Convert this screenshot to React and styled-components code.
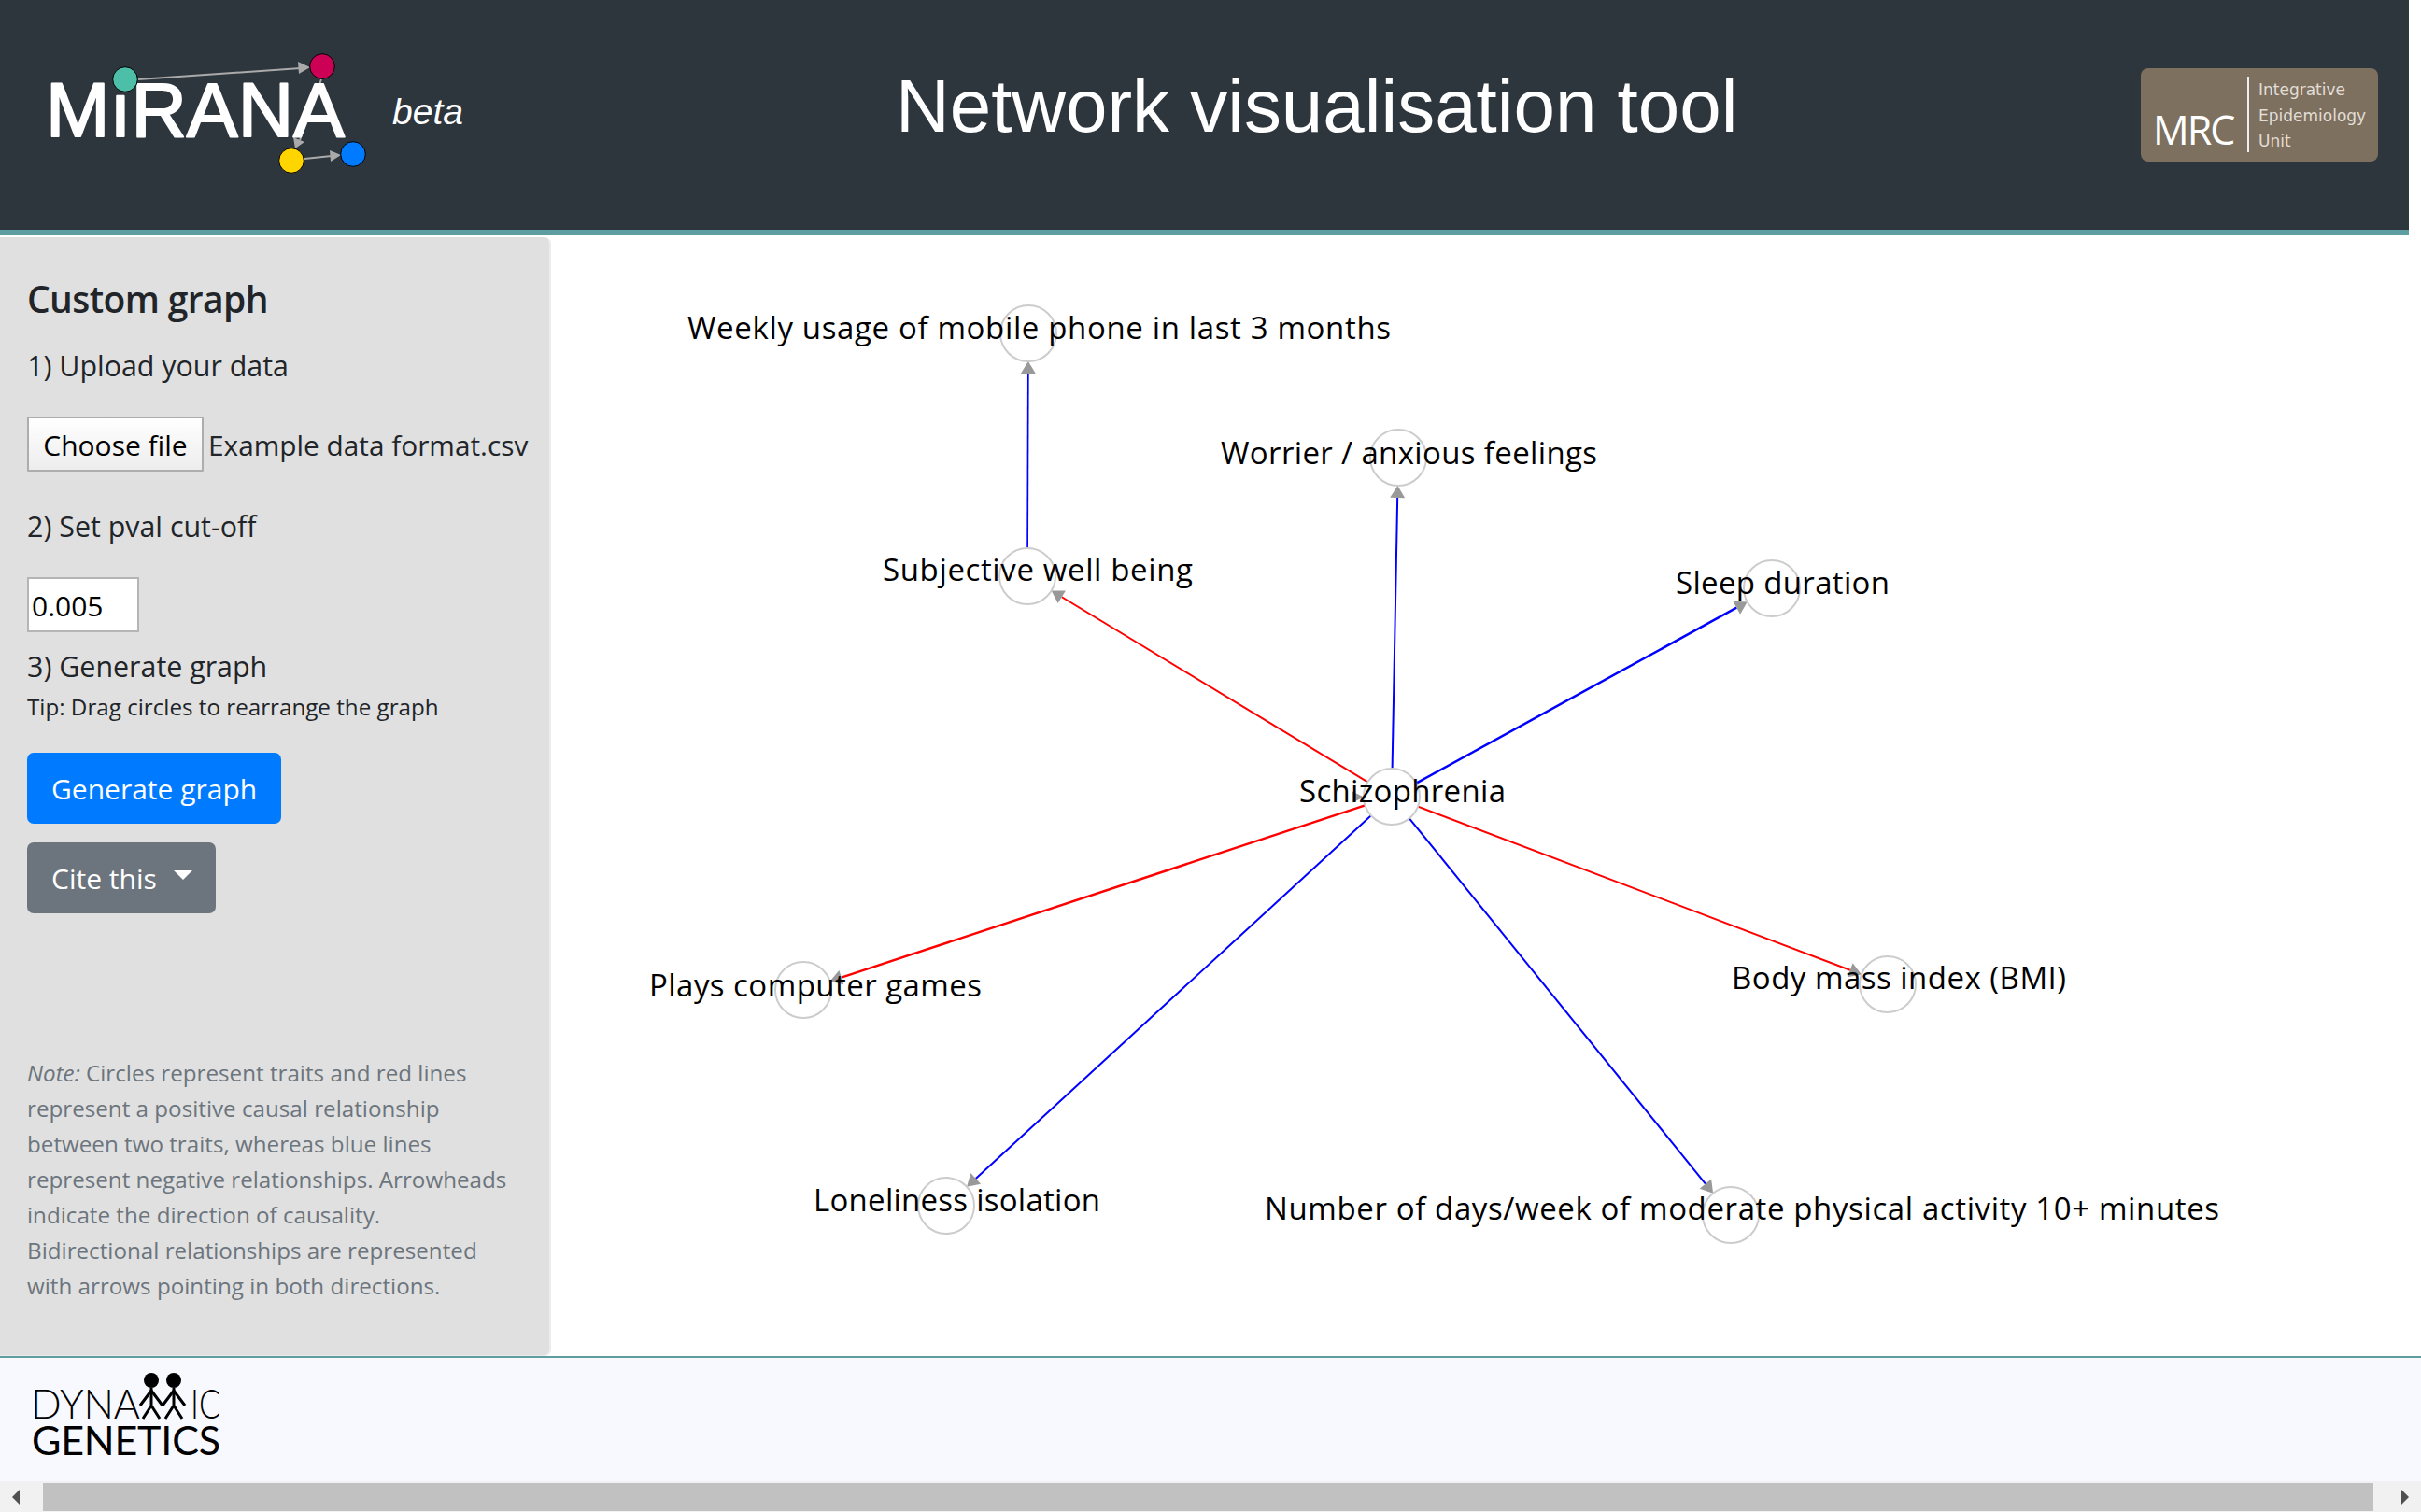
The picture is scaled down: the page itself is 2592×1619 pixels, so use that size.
import React from 'react'
import styled, { createGlobalStyle } from 'styled-components'

const Global = createGlobalStyle`
  html, body { margin: 0; padding: 0; background: #fff; overflow: hidden; }
  * { box-sizing: border-box; }
`

const SANS = '"Open Sans", "Noto Sans", sans-serif'
const ARIAL = '"Liberation Sans", Arial, sans-serif'

const Page = styled.div`
  width: 2592px;
  height: 1619px;
  display: flex;
  flex-direction: column;
  font-family: ${SANS};
  color: #212529;
`

const Header = styled.header`
  width: 2579px;
  height: 252px;
  flex: none;
  background: #2d353d;
  border-bottom: 6px solid #5f9ea0;
  display: grid;
  grid-template-columns: 959px auto 1fr;
  align-items: start;
`

const LogoWrap = styled.div`
  display: flex;
`

const Title = styled.h1`
  margin: 64px 0 0 0;
  font-family: ${ARIAL};
  font-weight: 400;
  font-size: 79.9px;
  line-height: 100px;
  color: #fff;
  white-space: nowrap;
`

const MrcBadge = styled.div`
  justify-self: end;
  margin: 73px 33px 0 0;
  width: 254px;
  height: 100px;
  border-radius: 8px;
  background: #7d705f;
  display: flex;
  align-items: stretch;
  padding: 9px 0 10px 13px;
`

const MrcName = styled.div`
  font-family: ${SANS};
  font-size: 43px;
  line-height: 1;
  color: #fff;
  align-self: flex-end;
  letter-spacing: -2px;
  width: 101px;
  margin-bottom: 3px;
`

const MrcRule = styled.div`
  width: 2px;
  background: #eee;
`

const MrcUnit = styled.div`
  margin-left: 10px;
  font-family: "DejaVu Sans", sans-serif;
  font-size: 17px;
  line-height: 27.5px;
  color: #e2ddd6;
  margin-top: 1px;
`

const Main = styled.main`
  height: 1200px;
  flex: none;
  display: flex;
  padding-top: 2px;
`

const Sidebar = styled.aside`
  width: 590px;
  height: 1198px;
  flex: none;
  background: #e0e0e0;
  border-right: 2px solid #ececec;
  border-bottom: 1px solid #ececec;
  border-radius: 0 7px 7px 0;
  padding: 42px 0 0 29px;
`

const Heading = styled.h4`
  margin: 0 0 28px;
  font-size: 39px;
  line-height: 48px;
  font-weight: 600;
  letter-spacing: -0.6px;
`

const Step = styled.div`
  font-size: 30.4px;
  line-height: 40px;
  margin-top: ${p => p.$top}px;
  white-space: nowrap;
`

const FileRow = styled.div`
  display: flex;
  align-items: center;
  margin-top: 34px;
  height: 59px;
  gap: 5px;
`

const FileButton = styled.button`
  width: 189px;
  height: 59px;
  padding: 2px 0 0;
  font-family: ${SANS};
  font-size: 30px;
  color: #000;
  background: linear-gradient(#fff, #ededed);
  border: 2px solid #adadad;
  border-radius: 1px;
`

const FileName = styled.span`
  padding-top: 2px;
  font-size: 29.8px;
  white-space: nowrap;
`

const PvalInput = styled.input`
  display: block;
  margin-top: 34px;
  width: 120px;
  height: 59px;
  padding: 2px 3px 0;
  font-family: ${SANS};
  font-size: 30px;
  color: #000;
  background: #fff;
  border: 2px solid #b5b5b5;
  outline: none;
`

const Tip = styled.div`
  margin-top: 9px;
  font-size: 24.2px;
  line-height: 28px;
  white-space: nowrap;
`

const Action = styled.button`
  display: flex;
  align-items: center;
  width: ${p => p.$width}px;
  height: 76px;
  margin-top: ${p => p.$top}px;
  padding: 0 0 0 26px;
  border: none;
  border-radius: 7px;
  background: ${p => p.$bg};
  color: #fff;
  font-family: ${SANS};
  font-size: 30px;
`

const Caret = styled.span`
  width: 0;
  height: 0;
  margin-left: 18px;
  margin-bottom: 6px;
  border-left: 10px solid transparent;
  border-right: 10px solid transparent;
  border-top: 10px solid #fff;
`

const Note = styled.p`
  margin: 152px 0 0;
  width: 525px;
  font-size: 24.2px;
  line-height: 38px;
  color: #6c757d;
`

const Graph = styled.svg`
  display: block;
  flex: none;
`

const NodeLabel = styled.text`
  font-family: ${SANS};
  font-size: 33px;
  fill: #000;
`

const Footer = styled.footer`
  height: 134px;
  flex: none;
  background: #f8f9fe;
  border-top: 2px solid #5f9ea0;
`

const Scrollbar = styled.div`
  height: 33px;
  flex: none;
  background: #f1f1f1;
  display: flex;
  align-items: center;
`

const ScrollEnd = styled.div`
  width: ${p => p.$width}px;
  flex: none;
  display: flex;
  padding-left: ${p => p.$pad}px;
`

const ScrollThumb = styled.div`
  flex: 1;
  height: 30px;
  margin-top: 1px;
  background: #c1c1c1;
`

const ArrowLeft = styled.span`
  width: 0;
  height: 0;
  border-top: 8px solid transparent;
  border-bottom: 8px solid transparent;
  border-right: 8px solid #505050;
`

const ArrowRight = styled.span`
  width: 0;
  height: 0;
  border-top: 8px solid transparent;
  border-bottom: 8px solid transparent;
  border-left: 8px solid #505050;
`

function MiranaLogo() {
  return (
    <svg width="520" height="200" viewBox="0 0 520 200">
      <g stroke="#aaa" fill="#aaa">
        <line x1="148" y1="85" x2="322" y2="73" strokeWidth="2" />
        <polygon points="332,72 319,66 320,79" stroke="none" />
        <line x1="344" y1="85" x2="321" y2="150" strokeWidth="2" />
        <polygon points="316,159 314,147 326,152" stroke="none" />
        <line x1="326" y1="170" x2="355" y2="167" strokeWidth="2" />
        <polygon points="365,166 353,161 354,173" stroke="none" />
      </g>
      <text
        x="49" y="146"
        fontFamily={ARIAL}
        fontSize="81"
        fill="#fff"
        stroke="#fff"
        strokeWidth="2"
        strokeLinejoin="round"
        textLength="320"
        lengthAdjust="spacingAndGlyphs"
      >
        MıRANA
      </text>
      <circle cx="134" cy="85" r="13.3" fill="#4dbfa8" stroke="#000" strokeWidth="1" />
      <circle cx="345" cy="71" r="13.3" fill="#cc0055" stroke="#000" strokeWidth="1" />
      <circle cx="312" cy="172" r="13.3" fill="#ffd500" stroke="#000" strokeWidth="1" />
      <circle cx="378" cy="165" r="13.3" fill="#007bff" stroke="#000" strokeWidth="1" />
      <text x="420" y="133" fontFamily={ARIAL} fontStyle="italic" fontSize="39" fill="#fff">beta</text>
    </svg>
  )
}

function DynamicGeneticsLogo() {
  const person = cx => (
    <g stroke="#000" strokeWidth="3" fill="none">
      <circle cx={cx} cy="24" r="8" fill="#000" stroke="none" />
      <path d={`M${cx} 32 L${cx} 51 M${cx} 51 L${cx - 9} 65 M${cx} 51 L${cx + 9} 65`} />
      <path d={`M${cx} 35 L${cx - 12} 51 M${cx} 35 L${cx + 12} 51`} />
    </g>
  )
  return (
    <svg width="280" height="132" viewBox="0 0 280 132">
      <text x="33" y="65" fontFamily="Lato, sans-serif" fontWeight="300" fontSize="43" textLength="117" fill="#000">DYNA</text>
      {person(162)}
      {person(186)}
      <text x="204" y="65" fontFamily="Lato, sans-serif" fontWeight="300" fontSize="43" textLength="32" lengthAdjust="spacingAndGlyphs" fill="#000">IC</text>
      <text x="34" y="104" fontFamily="Lato, sans-serif" fontWeight="400" fontSize="43" textLength="202" fill="#000">GENETICS</text>
    </svg>
  )
}

const NODE_R = 30
const HEAD = 13

const nodes = {
  schizo: { x: 1490, y: 853 },
  weekly: { x: 1101, y: 357 },
  subjective: { x: 1100, y: 617 },
  worrier: { x: 1497, y: 490 },
  sleep: { x: 1897, y: 630 },
  plays: { x: 860, y: 1060 },
  lonely: { x: 1013, y: 1291 },
  bmi: { x: 2021, y: 1054 },
  number: { x: 1853, y: 1301 },
}

const labels = [
  { text: 'Weekly usage of mobile phone in last 3 months', x: 736, y: 363, w: 753 },
  { text: 'Subjective well being', x: 945, y: 622, w: 332 },
  { text: 'Worrier / anxious feelings', x: 1307, y: 497, w: 403 },
  { text: 'Sleep duration', x: 1794, y: 636, w: 229 },
  { text: 'Schizophrenia', x: 1391, y: 859, w: 221 },
  { text: 'Plays computer games', x: 695, y: 1067, w: 356 },
  { text: 'Loneliness isolation', x: 871, y: 1297, w: 307 },
  { text: 'Body mass index (BMI)', x: 1854, y: 1059, w: 358 },
  { text: 'Number of days/week of moderate physical activity 10+ minutes', x: 1354, y: 1306, w: 1022 },
]

const edges = [
  { from: 'subjective', to: 'weekly', color: '#00f', width: 1.7 },
  { from: 'schizo', to: 'subjective', color: '#f00', width: 2 },
  { from: 'schizo', to: 'worrier', color: '#00f', width: 2 },
  { from: 'schizo', to: 'sleep', color: '#00f', width: 2.5 },
  { from: 'schizo', to: 'plays', color: '#f00', width: 2.5 },
  { from: 'schizo', to: 'lonely', color: '#00f', width: 2 },
  { from: 'schizo', to: 'number', color: '#00f', width: 2 },
  { from: 'schizo', to: 'bmi', color: '#f00', width: 2 },
]

function Edge({ from, to, color, width }) {
  const a = nodes[from]
  const b = nodes[to]
  const len = Math.hypot(b.x - a.x, b.y - a.y)
  const ux = (b.x - a.x) / len
  const uy = (b.y - a.y) / len
  const tip = { x: b.x - ux * NODE_R, y: b.y - uy * NODE_R }
  const base = { x: tip.x - ux * HEAD, y: tip.y - uy * HEAD }
  const wing = 8
  return (
    <g>
      <line
        x1={a.x + ux * NODE_R} y1={a.y + uy * NODE_R}
        x2={base.x} y2={base.y}
        stroke={color} strokeWidth={width}
      />
      <polygon
        fill="#999"
        points={`${tip.x},${tip.y} ${base.x - uy * wing},${base.y + ux * wing} ${base.x + uy * wing},${base.y - ux * wing}`}
      />
    </g>
  )
}

export default function App() {
  return (
    <Page>
      <Global />
      <Header>
        <LogoWrap><MiranaLogo /></LogoWrap>
        <Title>Network visualisation tool</Title>
        <MrcBadge>
          <MrcName>MRC</MrcName>
          <MrcRule />
          <MrcUnit>Integrative<br />Epidemiology<br />Unit</MrcUnit>
        </MrcBadge>
      </Header>
      <Main>
        <Sidebar>
          <Heading>Custom graph</Heading>
          <Step $top={0}>1) Upload your data</Step>
          <FileRow>
            <FileButton>Choose file</FileButton>
            <FileName>Example data format.csv</FileName>
          </FileRow>
          <Step $top={39}>2) Set pval cut-off</Step>
          <PvalInput defaultValue="0.005" />
          <Step $top={17}>3) Generate graph</Step>
          <Tip>Tip: Drag circles to rearrange the graph</Tip>
          <Action $width={272} $top={35} $bg="#007bff">Generate graph</Action>
          <Action $width={202} $top={20} $bg="#6c757d">Cite this<Caret /></Action>
          <Note>
            <em>Note:</em> Circles represent traits and red lines represent a positive causal relationship
            between two traits, whereas blue lines represent negative relationships. Arrowheads indicate
            the direction of causality. Bidirectional relationships are represented with arrows pointing
            in both directions.
          </Note>
        </Sidebar>
        <Graph width="2002" height="1198" viewBox="590 254 2002 1198">
          {edges.map(e => <Edge key={e.from + e.to} {...e} />)}
          <polygon points="1447,847 1447,860 1460,853.5" fill="#999" />
          {Object.entries(nodes).map(([id, n]) => (
            <circle key={id} cx={n.x} cy={n.y} r={NODE_R} fill="none" stroke="#ccc" strokeWidth="2" />
          ))}
          {labels.map(l => (
            <NodeLabel key={l.text} x={l.x} y={l.y} textLength={l.w}>{l.text}</NodeLabel>
          ))}
        </Graph>
      </Main>
      <Footer>
        <DynamicGeneticsLogo />
      </Footer>
      <Scrollbar>
        <ScrollEnd $width={46} $pad={13}><ArrowLeft /></ScrollEnd>
        <ScrollThumb />
        <ScrollEnd $width={51} $pad={30}><ArrowRight /></ScrollEnd>
      </Scrollbar>
    </Page>
  )
}
